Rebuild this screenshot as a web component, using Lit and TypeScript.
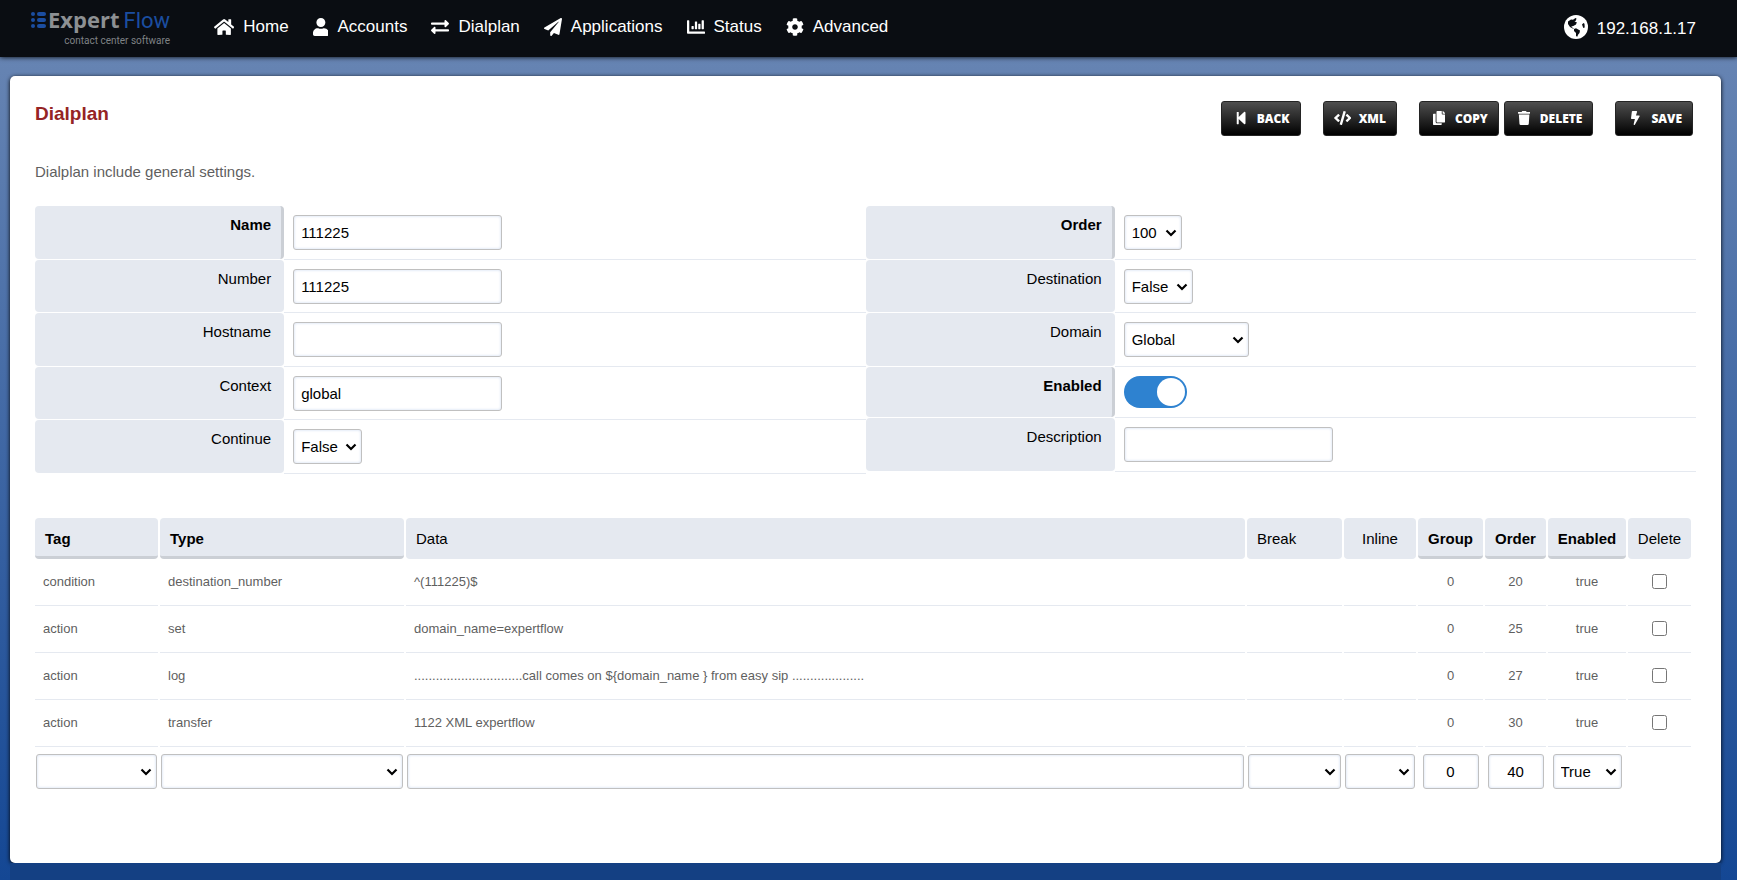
import { LitElement, html, css, svg } from "lit";
import { customElement, property } from "lit/decorators.js";
import { classMap } from "lit/directives/class-map.js";

type Glyph = { box: string; d: string };

const glyphs: Record<string, Glyph> = {
  home: {
    box: "0 0 576 512",
    d: "M280.37 148.26L96 300.11V464a16 16 0 0 0 16 16l112.06-.29a16 16 0 0 0 15.92-16V368a16 16 0 0 1 16-16h64a16 16 0 0 1 16 16v95.64a16 16 0 0 0 16 16.05L464 480a16 16 0 0 0 16-16V300L295.67 148.26a12.19 12.19 0 0 0-15.3 0zM571.6 251.47L488 182.56V44.05a12 12 0 0 0-12-12h-56a12 12 0 0 0-12 12v72.61L318.47 43a48 48 0 0 0-61 0L4.34 251.47a12 12 0 0 0-1.6 16.9l25.5 31A12 12 0 0 0 45.15 301l235.22-193.74a12.19 12.19 0 0 1 15.3 0L530.9 301a12 12 0 0 0 16.9-1.6l25.5-31a12 12 0 0 0-1.7-16.93z",
  },
  user: {
    box: "0 0 448 512",
    d: "M224 256c70.7 0 128-57.3 128-128S294.7 0 224 0 96 57.3 96 128s57.3 128 128 128zm89.6 32h-16.7c-22.2 10.2-46.9 16-72.9 16s-50.6-5.8-72.9-16h-16.7C60.2 288 0 348.2 0 422.4V464c0 26.5 21.5 48 48 48h352c26.5 0 48-21.5 48-48v-41.6c0-74.2-60.2-134.4-134.4-134.4z",
  },
  exchange: {
    box: "0 0 512 512",
    d: "M0 168v-16c0-13.255 10.745-24 24-24h360V80c0-21.367 25.899-32.042 40.971-16.971l80 80c9.372 9.373 9.372 24.569 0 33.941l-80 80C409.956 271.982 384 261.456 384 240v-48H24c-13.255 0-24-10.745-24-24zm488 152H128v-48c0-21.314-25.862-32.08-40.971-16.971l-80 80c-9.372 9.373-9.372 24.569 0 33.941l80 80C102.057 463.997 128 453.437 128 432v-48h360c13.255 0 24-10.745 24-24v-16c0-13.255-10.745-24-24-24z",
  },
  plane: {
    box: "0 0 512 512",
    d: "M476 3.2L12.5 270.6c-18.1 10.4-15.8 35.6 2.2 43.2L121 358.4l287.3-253.2c5.5-4.9 13.3 2.6 8.6 8.3L176 407v80.5c0 23.6 28.5 32.9 42.5 15.8L282 426l124.6 52.2c14.2 6 30.4-2.9 33-18.2l72-432C515 7.8 493.3-6.8 476 3.2z",
  },
  chart: {
    box: "0 0 512 512",
    d: "M332.8 320h38.4c6.4 0 12.8-6.4 12.8-12.8V172.8c0-6.4-6.4-12.8-12.8-12.8h-38.4c-6.4 0-12.8 6.4-12.8 12.8v134.4c0 6.4 6.4 12.8 12.8 12.8zm96 0h38.4c6.4 0 12.8-6.4 12.8-12.8V76.8c0-6.4-6.4-12.8-12.8-12.8h-38.4c-6.4 0-12.8 6.4-12.8 12.8v230.4c0 6.4 6.4 12.8 12.8 12.8zm-288 0h38.4c6.4 0 12.8-6.4 12.8-12.8v-70.4c0-6.4-6.4-12.8-12.8-12.8h-38.4c-6.4 0-12.8 6.4-12.8 12.8v70.4c0 6.4 6.4 12.8 12.8 12.8zm96 0h38.4c6.4 0 12.8-6.4 12.8-12.8V108.8c0-6.4-6.4-12.8-12.8-12.8h-38.4c-6.4 0-12.8 6.4-12.8 12.8v198.4c0 6.4 6.4 12.8 12.8 12.8zM496 384H64V80c0-8.84-7.16-16-16-16H16C7.16 64 0 71.16 0 80v336c0 17.67 14.33 32 32 32h464c8.84 0 16-7.16 16-16v-32c0-8.84-7.16-16-16-16z",
  },
  cog: {
    box: "0 0 512 512",
    d: "M487.4 315.7l-42.6-24.6c4.3-23.2 4.3-47 0-70.2l42.6-24.6c4.9-2.8 7.1-8.6 5.5-14-11.1-35.6-30-67.8-54.7-94.6-3.8-4.1-10-5.1-14.8-2.3L380.8 110c-17.9-15.4-38.5-27.3-60.8-35.1V25.8c0-5.6-3.9-10.5-9.4-11.7-36.7-8.2-74.3-7.8-109.2 0-5.5 1.2-9.4 6.1-9.4 11.7V75c-22.2 7.9-42.8 19.8-60.8 35.1L88.7 85.5c-4.9-2.8-11-1.9-14.8 2.3-24.7 26.7-43.6 58.9-54.7 94.6-1.7 5.4.6 11.2 5.5 14L67.3 221c-4.3 23.2-4.3 47 0 70.2l-42.6 24.6c-4.9 2.8-7.1 8.6-5.5 14 11.1 35.6 30 67.8 54.7 94.6 3.8 4.1 10 5.1 14.8 2.3l42.6-24.6c17.9 15.4 38.5 27.3 60.8 35.1v49.2c0 5.6 3.9 10.5 9.4 11.7 36.7 8.2 74.3 7.8 109.2 0 5.5-1.2 9.4-6.1 9.4-11.7v-49.2c22.2-7.9 42.8-19.8 60.8-35.1l42.6 24.6c4.9 2.8 11 1.9 14.8-2.3 24.7-26.7 43.6-58.9 54.7-94.6 1.5-5.5-.7-11.3-5.6-14.1zM256 336c-44.1 0-80-35.9-80-80s35.9-80 80-80 80 35.9 80 80-35.9 80-80 80z",
  },
  back: {
    box: "0 0 448 512",
    d: "M64 468V44c0-6.6 5.4-12 12-12h48c6.6 0 12 5.4 12 12v176.4l195.5-181C352.1 22.3 384 36.6 384 64v384c0 27.4-31.9 41.7-52.5 24.6L136 292.7V468c0 6.6-5.4 12-12 12H76c-6.6 0-12-5.4-12-12z",
  },
  code: {
    box: "0 0 640 512",
    d: "M278.9 511.5l-61-17.7c-6.4-1.8-10-8.5-8.2-14.9L346.2 8.7c1.8-6.4 8.5-10 14.9-8.2l61 17.7c6.4 1.8 10 8.5 8.2 14.9L293.8 503.3c-1.9 6.4-8.5 10.1-14.9 8.2zm-114-112.2l43.5-46.4c4.6-4.9 4.3-12.7-.8-17.2L117 256l90.6-79.7c5.1-4.5 5.5-12.3.8-17.2l-43.5-46.4c-4.5-4.8-12.1-5.1-17-.5L3.8 247.2c-5.1 4.7-5.1 12.8 0 17.5l144.1 135.1c4.9 4.6 12.5 4.4 17-.5zm327.2.6l144.1-135.1c5.1-4.7 5.1-12.8 0-17.5L492.1 112.1c-4.8-4.5-12.4-4.3-17 .5L431.6 159c-4.6 4.9-4.3 12.7.8 17.2L523 256l-90.6 79.7c-5.1 4.5-5.5 12.3-.8 17.2l43.5 46.4c4.5 4.9 12.1 5.1 17 .6z",
  },
  copy: {
    box: "0 0 448 512",
    d: "M320 448v40c0 13.255-10.745 24-24 24H24c-13.255 0-24-10.745-24-24V120c0-13.255 10.745-24 24-24h72v296c0 30.879 25.121 56 56 56h168zm0-344V0H152c-13.255 0-24 10.745-24 24v368c0 13.255 10.745 24 24 24h272c13.255 0 24-10.745 24-24V128H344c-13.2 0-24-10.8-24-24zm120.971-31.029L375.029 7.029A24 24 0 0 0 358.059 0H352v96h96v-6.059a24 24 0 0 0-7.029-16.97z",
  },
  trash: {
    box: "0 0 448 512",
    d: "M432 32H312l-9.4-18.7A24 24 0 0 0 281.1 0H166.8a23.72 23.72 0 0 0-21.4 13.3L136 32H16A16 16 0 0 0 0 48v32a16 16 0 0 0 16 16h416a16 16 0 0 0 16-16V48a16 16 0 0 0-16-16zM32 128l21.2 339a48 48 0 0 0 47.9 45h245.8a48 48 0 0 0 47.9-45L416 128z",
  },
  bolt: {
    box: "0 0 320 512",
    d: "M296 160H180.6l42.6-129.8C227.2 15 215.7 0 200 0H56C44 0 33.8 8.9 32.2 20.8l-32 240C-1.7 275.2 9.5 288 24 288h118.7L96.6 482.5c-3.6 15.2 8 29.5 23.3 29.5 8.4 0 16.4-4.4 20.8-12l176-304c9.3-15.9-2.2-36-20.7-36z",
  },
};

@customElement("app-icon")
export class AppIcon extends LitElement {
  @property() name = "home";
  static styles = css`
    :host { display: inline-flex; justify-content: center; align-items: center; }
    .glyph { height: 100%; display: block; fill: currentColor; }
  `;
  render() {
    const g = glyphs[this.name];
    return html`<svg class="glyph" viewBox=${g.box} aria-hidden="true">${svg`<path d=${g.d}></path>`}</svg>`;
  }
}

@customElement("app-topbar")
export class AppTopbar extends LitElement {
  private items = [
    ["home", "Home"],
    ["user", "Accounts"],
    ["exchange", "Dialplan"],
    ["plane", "Applications"],
    ["chart", "Status"],
    ["cog", "Advanced"],
  ];
  static styles = css`
    :host { display: block; }
    .bar {
      height: 57px; display: flex; align-items: center; padding: 0 41px 0 31px;
      background: #0a0d12; box-shadow: 0 0 5px #000; box-sizing: border-box;
      color: #fff; font: 17px/20px "Liberation Sans", Arial, sans-serif;
    }
    .logo { display: flex; flex-direction: column; align-items: flex-end; gap: 2px; margin-right: 44px; padding-bottom: 4px; text-decoration: none; }
    .word { display: flex; align-items: baseline; line-height: 24px; }
    .dots { width: 16px; height: 18px; margin-right: 1px; fill: #1b4da0; }
    .expert { font: 700 22px/24px "Open Sans", sans-serif; color: #8d9093; margin-right: 4px; }
    .flow { font: 400 22px/24px Roboto, sans-serif; color: #1b4da0; }
    .tagline { font: 400 10px/12px Roboto, sans-serif; color: #7f8285; }
    .menu { display: flex; gap: 24px; padding-bottom: 4px; }
    .menu a { display: flex; gap: 9px; align-items: center; color: #fff; text-decoration: none; }
    .menu app-icon { height: 18px; }
    .server { margin-left: auto; display: flex; gap: 9px; align-items: center; color: #fff; text-decoration: none; }
    .globe { width: 24px; height: 24px; margin-bottom: 4px; }
  `;
  render() {
    return html`<header class="bar">
      <a class="logo" href="#">
        <span class="word">
          <svg class="dots" viewBox="0 0 16 18" aria-hidden="true">
            <circle cx="2" cy="4" r="2"></circle><rect x="6" y="2" width="9" height="4" rx="2"></rect>
            <circle cx="2" cy="10" r="2"></circle><rect x="6" y="8" width="9" height="4" rx="2"></rect>
            <circle cx="2" cy="16" r="2"></circle><rect x="6" y="14" width="9" height="4" rx="2"></rect>
          </svg>
          <span class="expert">Expert</span><span class="flow">Flow</span>
        </span>
        <span class="tagline">contact center software</span>
      </a>
      <nav class="menu">
        ${this.items.map(([icon, label]) => html`<a href="#"><app-icon name=${icon}></app-icon><span>${label}</span></a>`)}
      </nav>
      <a class="server" href="#">
        <svg class="globe" viewBox="0 0 24 24" aria-hidden="true">
          <circle cx="12" cy="12" r="12" fill="#fff"></circle>
          <path fill="#0a0d12" d="M4 6.5L7 4.5l2 .2L11.5 3l1 .6-.6 1.8-1.4 1 2.3.8-.8 2.2L9.3 11l-2 .6.8 1 1.7.6-.6.5L6 12 4 9zM10 14l2-.7 4 2.2-.5 2.5-1.3 1.5-1 2.3-1.2-.8V18l-2-2zM18 9.6l1.5-1.6 1 .8.2 3.6-1.4.6z"></path>
        </svg>
        <span>192.168.1.17</span>
      </a>
    </header>`;
  }
}

type Field = {
  id: string;
  label: string;
  required?: boolean;
  kind: "text" | "select" | "toggle";
  value: string;
  size?: string;
};

const leftFields: Field[] = [
  { id: "name", label: "Name", required: true, kind: "text", value: "111225" },
  { id: "number", label: "Number", kind: "text", value: "111225" },
  { id: "hostname", label: "Hostname", kind: "text", value: "" },
  { id: "context", label: "Context", kind: "text", value: "global" },
  { id: "continue", label: "Continue", kind: "select", value: "False", size: "mid" },
];

const rightFields: Field[] = [
  { id: "order", label: "Order", required: true, kind: "select", value: "100", size: "small" },
  { id: "destination", label: "Destination", kind: "select", value: "False", size: "mid" },
  { id: "domain", label: "Domain", kind: "select", value: "Global", size: "large" },
  { id: "enabled", label: "Enabled", required: true, kind: "toggle", value: "true" },
  { id: "description", label: "Description", kind: "text", value: "" },
];

const details = [
  ["condition", "destination_number", "^(111225)$", "0", "20"],
  ["action", "set", "domain_name=expertflow", "0", "25"],
  ["action", "log", "..............................call comes on ${domain_name } from easy sip ....................", "0", "27"],
  ["action", "transfer", "1122 XML expertflow", "0", "30"],
];

@customElement("app-root")
export class AppRoot extends LitElement {
  static styles = css`
    :host {
      display: flex; flex-direction: column; min-height: 100vh; color: #5f5f5f;
      font: 15px/20px "Liberation Sans", Arial, sans-serif;
      background: linear-gradient(to bottom, #6b88b6 0%, #6583b2 8%, #144794 100%);
    }
    .page { flex: 1; display: flex; flex-direction: column; padding: 19px 16px 0 10px; }
    .card {
      flex: 1; background: #fff; border-radius: 5px; padding: 25px; box-sizing: border-box;
      box-shadow: 0 1px 4px #000;
    }
    .footer { height: 17px; background: #144083; }
    .top { display: flex; justify-content: space-between; align-items: flex-start; padding-right: 3px; }
    h1 { margin: 2px 0 0; font-size: 19px; line-height: 22px; color: #952424; }
    .actions { display: flex; }
    .btn {
      height: 35px; display: flex; align-items: center; gap: 7px; padding: 0 10px;
      border: 1px solid #242424; border-radius: 3px; color: #fff;
      background: linear-gradient(to bottom, #4f4f4f, #000);
      font: 800 12px/16px "Open Sans", sans-serif; text-transform: uppercase;
    }
    .btn app-icon { width: 18px; height: 14px; margin-bottom: 2px; }
    .gap { margin-left: 5px; }
    .wide { margin-left: 22px; }
    .intro { margin: 26px 0 24px; }
    .form { display: grid; grid-template-columns: 1fr 1fr; align-items: start; }
    .row { display: grid; grid-template-columns: 3fr 7fr; min-height: 51px; }
    .row label {
      background: #e5e9f0; border-radius: 4px; color: #000; text-align: right;
      padding: 9px 13px 0 0; margin-bottom: 1px;
    }
    .row label.required { font-weight: 700; border-right: 3px solid #cbcfd5; padding-right: 10px; }
    .control { padding: 9px; border-bottom: 1px solid #e5e9f0; }
    .row:nth-child(even) .control { padding-bottom: 8px; }
    .row:nth-child(even) .control.toggles { padding-bottom: 9px; }
    .field {
      height: 35px; box-sizing: border-box; display: block; margin: 0; padding: 0 7px; color: #000; background: #fff;
      border: 1px solid #c0c0c0; border-radius: 3px; box-shadow: 0 0 3px #cddaf0 inset;
      font: 15px/20px "Liberation Sans", Arial, sans-serif;
    }
    select.field {
      appearance: none; padding: 0 0 0 7px;
      background: #fff url("data:image/svg+xml,%3Csvg xmlns='http://www.w3.org/2000/svg' width='12' height='8'%3E%3Cpath d='M1.5 1.5L6 6l4.500-4.500' fill='none' stroke='%23000' stroke-width='2.200'/%3E%3C/svg%3E") no-repeat right 4px center;
    }
    .text { width: 209px; }
    .small { width: 58px; }
    .mid { width: 69px; }
    .large { width: 125px; }
    .switch { appearance: none; display: flex; justify-content: flex-end; width: 63px; height: 32px; margin: 0; padding: 2px; box-sizing: border-box; border-radius: 16px; background: #2e82d0; }
    .switch::before { content: ""; width: 28px; height: 28px; border-radius: 14px; background: #fff; }
    .switch:not(:checked) { justify-content: flex-start; background: #c0c0c0; }
    .list { padding: 44px 3px 30px 0; margin-left: -2px; }
    table { width: 100%; table-layout: fixed; border-collapse: separate; border-spacing: 2px 0; }
    th {
      height: 41px; box-sizing: border-box; background: #e5e9f0; border-radius: 4px; color: #000; font-weight: 400;
      padding: 3px 10px 0; text-align: left; border-bottom: 3px solid #e5e9f0;
    }
    th.required { font-weight: 700; border-bottom-color: #cbcfd5; }
    th.center, td.center { text-align: center; padding-left: 0; padding-right: 0; }
    td { height: 47px; box-sizing: border-box; font-size: 13px; padding: 0 8px; border-bottom: 1px solid #e5e9f0; white-space: nowrap; }
    td.edit { height: 50px; padding: 7px 1px 0; border: 0; vertical-align: top; }
    td.edit .field { width: 100%; }
    td.edit .field.num { width: 56px; margin: 0 auto; text-align: center; }
    td.edit .field.mid { width: 69px; margin: 0 auto; }
    td input[type="checkbox"] { width: 15px; height: 15px; margin: 0 0 3px; display: inline-block; vertical-align: middle; }
    .c-tag { width: 123px; } .c-type { width: 244px; } .c-break { width: 95px; } .c-inline { width: 72px; }
    .c-group { width: 65px; } .c-order { width: 61px; } .c-enabled { width: 78px; } .c-delete { width: 63px; }
  `;

  private field(f: Field) {
    const control =
      f.kind === "text"
        ? html`<input class="field text" id=${f.id} type="text" .value=${f.value} />`
        : f.kind === "select"
        ? html`<select class="field ${f.size ?? ""}" id=${f.id}><option>${f.value}</option></select>`
        : html`<input class="switch" id=${f.id} type="checkbox" checked />`;
    return html`<div class="row">
      <label for=${f.id} class=${classMap({ required: !!f.required })}>${f.label}</label>
      <div class=${classMap({ control: true, toggles: f.kind === "toggle" })}>${control}</div>
    </div>`;
  }

  private button(icon: string, label: string, space: string) {
    return html`<button type="button" class="btn ${space}"><app-icon name=${icon}></app-icon><span>${label}</span></button>`;
  }

  render() {
    return html`
      <app-topbar></app-topbar>
      <div class="page">
        <main class="card">
          <div class="top">
            <h1>Dialplan</h1>
            <div class="actions">
              ${this.button("back", "Back", "")} ${this.button("code", "XML", "wide")}
              ${this.button("copy", "Copy", "wide")} ${this.button("trash", "Delete", "gap")}
              ${this.button("bolt", "Save", "wide")}
            </div>
          </div>
          <p class="intro">Dialplan include general settings.</p>
          <div class="form">
            <div>${leftFields.map((f) => this.field(f))}</div>
            <div>${rightFields.map((f) => this.field(f))}</div>
          </div>
          <div class="list">
            <table>
              <colgroup>
                <col class="c-tag" /><col class="c-type" /><col /><col class="c-break" /><col class="c-inline" />
                <col class="c-group" /><col class="c-order" /><col class="c-enabled" /><col class="c-delete" />
              </colgroup>
              <thead>
                <tr>
                  <th class="required">Tag</th><th class="required">Type</th><th>Data</th><th>Break</th>
                  <th class="center">Inline</th><th class="required center">Group</th><th class="required center">Order</th>
                  <th class="required center">Enabled</th><th class="center">Delete</th>
                </tr>
              </thead>
              <tbody>
                ${details.map(
                  ([tag, type, data, group, order]) => html`<tr>
                    <td>${tag}</td><td>${type}</td><td>${data}</td><td></td><td></td>
                    <td class="center">${group}</td><td class="center">${order}</td><td class="center">true</td>
                    <td class="center"><input type="checkbox" aria-label="Delete ${type}" /></td>
                  </tr>`
                )}
                <tr>
                  <td class="edit"><select class="field" aria-label="Tag"><option></option></select></td>
                  <td class="edit"><select class="field" aria-label="Type"><option></option></select></td>
                  <td class="edit"><input class="field" type="text" aria-label="Data" /></td>
                  <td class="edit"><select class="field" aria-label="Break"><option></option></select></td>
                  <td class="edit"><select class="field" aria-label="Inline"><option></option></select></td>
                  <td class="edit"><input class="field num" type="text" aria-label="Group" value="0" /></td>
                  <td class="edit"><input class="field num" type="text" aria-label="Order" value="40" /></td>
                  <td class="edit"><select class="field mid" aria-label="Enabled"><option>True</option></select></td>
                  <td class="edit"></td>
                </tr>
              </tbody>
            </table>
          </div>
        </main>
        <div class="footer"></div>
      </div>
    `;
  }
}
